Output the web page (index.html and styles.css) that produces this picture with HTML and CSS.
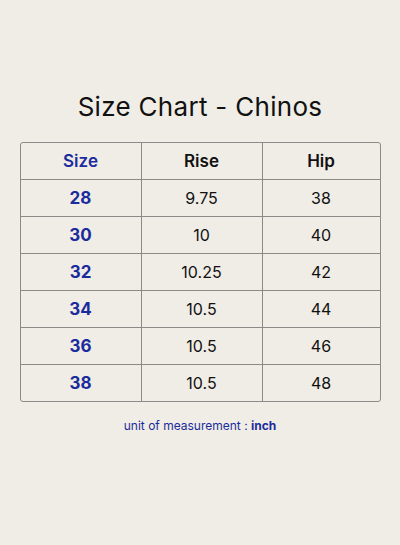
FILE: index.html
```html
<!DOCTYPE html>
<html>
<head>
<meta charset="utf-8">
<link rel="stylesheet" href="styles.css">
</head>
<body>
<div class="page">
  <h1 class="title">Size Chart - Chinos</h1>
  <div class="table">
    <div class="row head">
      <div class="cell size">Size</div><div class="cell">Rise</div><div class="cell">Hip</div>
    </div>
    <div class="row"><div class="cell size">28</div><div class="cell">9.75</div><div class="cell">38</div></div>
    <div class="row"><div class="cell size">30</div><div class="cell">10</div><div class="cell">40</div></div>
    <div class="row"><div class="cell size">32</div><div class="cell">10.25</div><div class="cell">42</div></div>
    <div class="row"><div class="cell size">34</div><div class="cell">10.5</div><div class="cell">44</div></div>
    <div class="row"><div class="cell size">36</div><div class="cell">10.5</div><div class="cell">46</div></div>
    <div class="row"><div class="cell size">38</div><div class="cell">10.5</div><div class="cell">48</div></div>
  </div>
  <p class="note">unit of measurement : <b>inch</b></p>
</div>
</body>
</html>
```
FILE: styles.css
```css
html, body {
  margin: 0;
  padding: 0;
  background: #f0ece6;
}
.page {
  width: 400px;
  height: 545px;
  display: flex;
  flex-direction: column;
  align-items: center;
  font-family: "Inter", "Lato", sans-serif;
  color: #111;
}
.title {
  margin: 89px 0 0;
  font-size: 26px;
  font-weight: 400;
  line-height: 35px;
  letter-spacing: 0.3px;
}
.table {
  margin-top: 18px;
  width: 361px;
  border: 1px solid #8c8a88;
  border-radius: 3px;
  box-sizing: border-box;
  overflow: hidden;
}
.row {
  display: grid;
  grid-template-columns: 120px 121px 1fr;
  height: 37px;
  border-top: 1px solid #8c8a88;
  box-sizing: border-box;
}
.row.head {
  border-top: none;
  height: 36px;
}
.cell {
  display: flex;
  align-items: center;
  justify-content: center;
  font-size: 16px;
  border-left: 1px solid #8c8a88;
}
.cell:first-child {
  border-left: none;
}
.head .cell {
  font-weight: 600;
  font-size: 17px;
}
.size {
  color: #1a2c9c;
  font-weight: 700;
  font-size: 17px;
}
.note {
  margin: 16px 0 0;
  font-size: 12px;
  color: #1a2c9c;
}
.note b {
  font-weight: 700;
}
```
